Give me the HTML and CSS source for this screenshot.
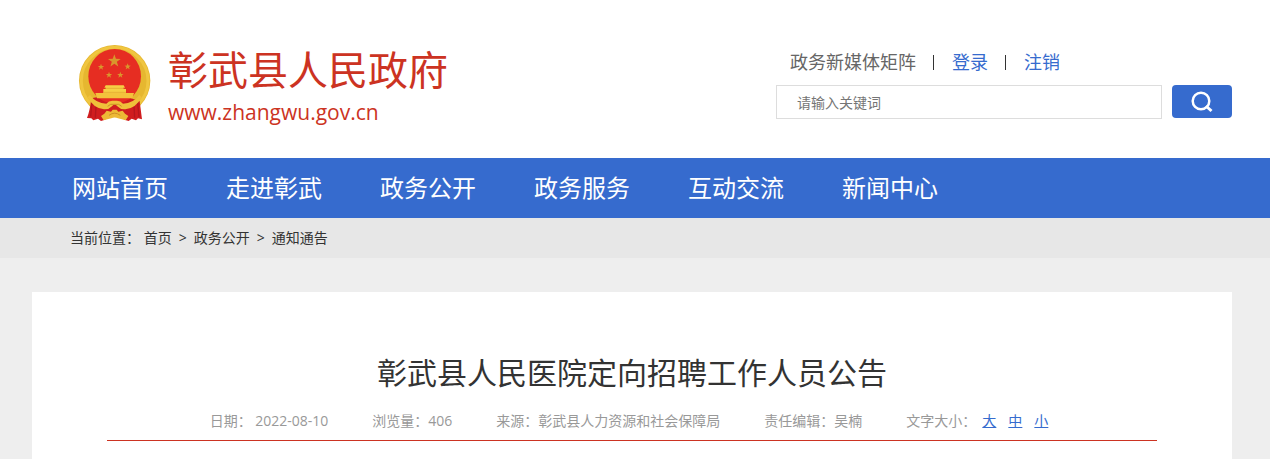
FILE: index.html
```html
<!DOCTYPE html>
<html lang="zh-CN">
<head>
    <meta charset="UTF-8">
    <title>彰武县人民医院定向招聘工作人员公告</title>
    <meta name="viewport" content="width=device-width, initial-scale=1.0">
    <link rel="stylesheet" href="styles.css">
</head>
<body>
    <header class="header">
        <div class="header-inner wrap">
            <a class="logo" href="#">
                <svg class="emblem" viewBox="24 25 222 237" aria-hidden="true">
                    <defs>
                        <path id="star" d="M0-10 2.4-3.2 9.5-3.1 3.8 1.2 5.9 8.1 0 4-5.9 8.1-3.8 1.2-9.5-3.1-2.4-3.2Z"/>
                    </defs>
                    <circle cx="134" cy="135" r="107" fill="#e6b730"/>
                    <circle cx="134" cy="135" r="100" fill="none" stroke="#f0c640" stroke-width="9"/>
                    <!-- ribbon -->
                    <path d="M64 188Q60 225 51 247l13 1 6 6 14-5 9 7 12-4 12-12h34l12 12 13 4 9-7 13 5 6-6 12 3-7-54-34-12H80Z" fill="#d01d1f"/>
                    <path d="M66 198l-4 44M78 212l-2 34M203 200l4 44M192 212l2 34" stroke="#b5171c" stroke-width="4"/>
                    <ellipse cx="134" cy="122" rx="79" ry="82" fill="#e62d22"/>
                    <g fill="#d9972c">
                        <use href="#star" transform="translate(133 76) scale(2)"/>
                        <use href="#star" x="93" y="94"/>
                        <use href="#star" x="173" y="93"/>
                        <use href="#star" x="117" y="118"/>
                        <use href="#star" x="151" y="118"/>
                    </g>
                    <!-- gate -->
                    <path d="M107 149h54l4 7h-5v4h8v12H100v-12h8v-4h-5Z" fill="#f6cf45"/>
                    <path d="M76 172h116l-5 16H81Z" fill="#f3c23c"/>
                    <path d="M105 158h58M100 170h68" stroke="#dfa02c" stroke-width="2"/>
                    <!-- wheat ends and gear -->
                    <path d="M60 178q18 25 49 26 7-9 18-9h14q11 0 18 9 31-1 49-26l7 7q-18 34-49 36-14 1-22-8l-7-6h-6l-7 6q-8 9-22 8-31-2-49-36Z" fill="#efc03a"/>
                    <path d="M93 241l10-7 7-9 13 3 5-6h12l5 6 13-3 7 9 10 7-8 13-23-6q-10-5-20 0l-23 6Z" fill="#edb936"/>
                    <path d="M117 239q17-13 34 0M113 212l9-6h24l9 6" fill="none" stroke="#cd9025" stroke-width="3"/>
                </svg>
                <span class="site">
                    <span class="site-name">彰武县人民政府</span>
                    <span class="site-url">www.zhangwu.gov.cn</span>
                </span>
            </a>
            <div class="tools">
                <div class="top-links">
                    <a class="media" href="#">政务新媒体矩阵</a>
                    <a href="#">登录</a>
                    <a href="#">注销</a>
                </div>
                <form class="search">
                    <input type="text" placeholder="请输入关键词" aria-label="请输入关键词">
                    <button type="button" aria-label="搜索">
                        <svg width="24" height="24" viewBox="0 0 24 24" fill="none" stroke="#fff" stroke-width="2.5" aria-hidden="true">
                            <circle cx="11" cy="11" r="8.3"/>
                            <path d="M16 16l5.5 5" stroke-width="3"/>
                        </svg>
                    </button>
                </form>
            </div>
        </div>
    </header>

    <nav class="nav">
        <div class="nav-list wrap">
            <a href="#">网站首页</a>
            <a href="#">走进彰武</a>
            <a href="#">政务公开</a>
            <a href="#">政务服务</a>
            <a href="#">互动交流</a>
            <a href="#">新闻中心</a>
        </div>
    </nav>

    <div class="crumbs">
        <div class="crumbs-list wrap">
            <span>当前位置： <a href="#">首页</a></span>
            <span>&gt;</span>
            <a href="#">政务公开</a>
            <span>&gt;</span>
            <a href="#">通知通告</a>
        </div>
    </div>

    <main class="article wrap">
        <h1>彰武县人民医院定向招聘工作人员公告</h1>
        <div class="meta">
            <span>日期： 2022-08-10</span>
            <span>浏览量：406</span>
            <span>来源：彰武县人力资源和社会保障局</span>
            <span>责任编辑：吴楠</span>
            <span class="sizes">文字大小： <a href="#">大</a><a href="#">中</a><a href="#">小</a></span>
        </div>
    </main>
</body>
</html>
```

FILE: styles.css
```css
* {
    box-sizing: border-box;
}
body {
    margin: 0;
    background-color: #eee;
    color: #333;
    font-family: "Open Sans", "Noto Sans CJK SC", sans-serif;
    font-size: 14px;
    line-height: 20px;
}
a {
    color: inherit;
    text-decoration: none;
}
.wrap {
    max-width: 1200px;
    margin: 0 38px 0 32px;
}
.header {
    padding: 44px 0 30px;
    background-color: #fff;
}
.header-inner {
    display: flex;
    justify-content: space-between;
}
.logo {
    display: flex;
    gap: 16px;
    padding-left: 46px;
    color: #cc3322;
}
.emblem {
    width: 74px;
    height: 79px;
}
.site {
    display: flex;
    flex-direction: column;
}
.site-name {
    font-size: 40px;
    line-height: 52px;
}
.site-url {
    font-size: 21px;
    line-height: 32px;
}
.tools {
    width: 456px;
    padding-top: 4px;
}
.top-links {
    display: flex;
    padding-left: 14px;
    margin-bottom: 9px;
    color: #366bce;
    font-size: 18px;
    line-height: 28px;
}
.top-links .media {
    color: #666;
}
.top-links a + a {
    display: flex;
    align-items: center;
    gap: 18px;
    margin-left: 17px;
}
.top-links a + a::before {
    content: "";
    width: 1px;
    height: 15px;
    background-color: #333;
}
.search {
    display: flex;
    gap: 10px;
}
.search input {
    flex: 1;
    min-width: 0;
    height: 34px;
    padding: 0 20px;
    border: 1px solid #ddd;
    background-color: #fff;
    font: inherit;
}
.search input::placeholder {
    color: #757575;
}
.search button {
    display: flex;
    align-items: center;
    justify-content: center;
    width: 60px;
    height: 33px;
    padding: 0;
    border: 0;
    border-radius: 4px;
    background-color: #366bce;
    cursor: pointer;
}
.nav {
    background-color: #366bce;
    color: #fff;
}
.nav-list {
    display: flex;
    gap: 58px;
    padding-left: 40px;
    font-size: 24px;
    line-height: 60px;
}
.crumbs {
    background-color: #e7e7e7;
}
.crumbs-list {
    display: flex;
    gap: 7px;
    padding-left: 38px;
    line-height: 40px;
}
.article {
    margin-top: 34px;
    padding: 58px 75px 20px;
    background-color: #fff;
}
.article h1 {
    margin: 0;
    font-size: 30px;
    font-weight: 400;
    line-height: 46px;
    text-align: center;
}
.meta {
    display: flex;
    justify-content: center;
    gap: 44px;
    padding: 10px 0 4px;
    border-bottom: 1px solid #cc3322;
    color: #999;
    line-height: 30px;
}
.sizes {
    display: flex;
}
.sizes a {
    margin: 0 6px;
    color: #366bce;
    text-decoration: underline;
}
```
